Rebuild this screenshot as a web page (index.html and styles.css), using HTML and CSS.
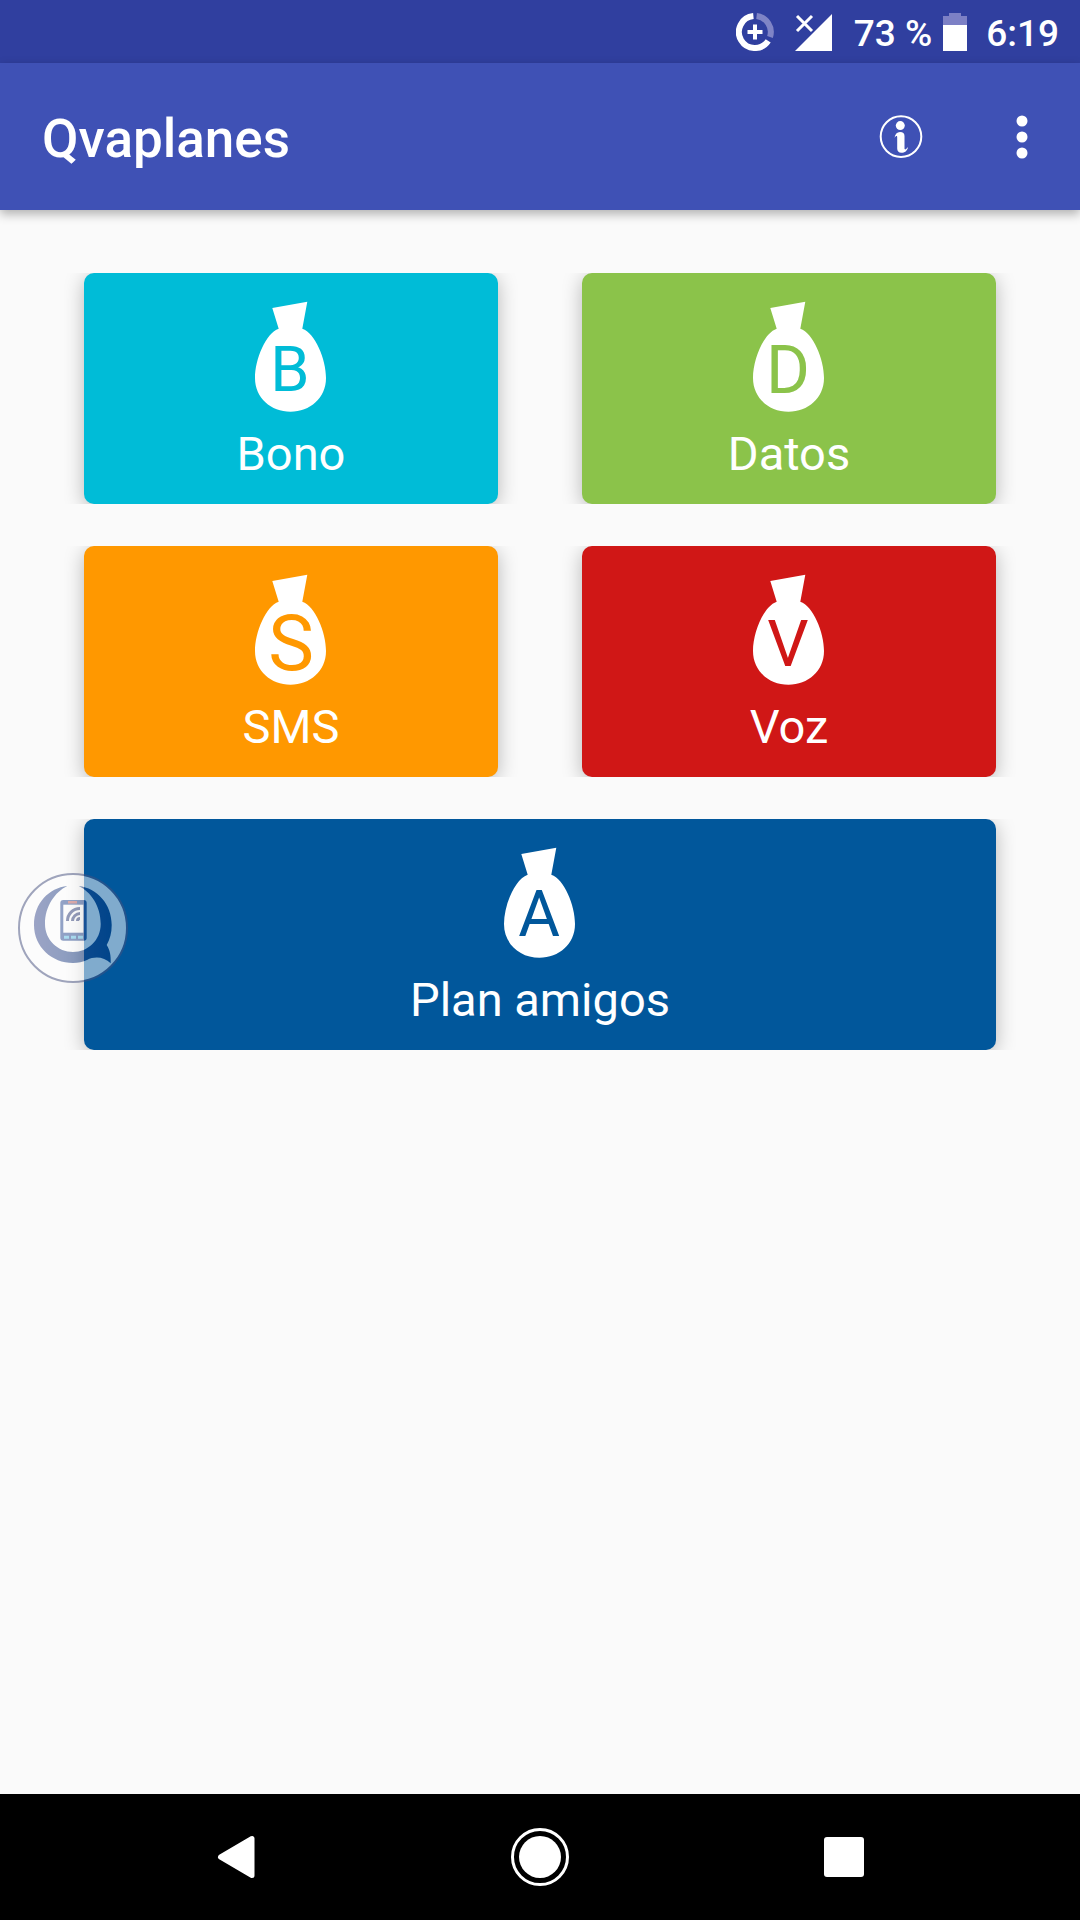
FILE: index.html
```html
<!DOCTYPE html>
<html lang="es">
<head>
  <meta charset="utf-8">
  <meta name="viewport" content="width=device-width, initial-scale=1">
  <title>Qvaplanes</title>
  <link rel="stylesheet" href="styles.css">
</head>
<body>

<div class="status-bar">
  <svg class="status-icon" viewBox="0 0 38 38">
    <path d="M20.6 3.1A16 16 0 0 1 34 24" fill="none" stroke="#7f84c6" stroke-width="6"/>
    <path d="M17.4 3.1A16 16 0 1 0 32.2 27.9" fill="none" stroke="#fff" stroke-width="6"/>
    <path d="M19 11.5v15M11.5 19h15" stroke="#fff" stroke-width="4"/>
  </svg>
  <svg class="status-icon" viewBox="0 0 38 38">
    <path d="M0 38L37 38L37 1Z" fill="#fff"/>
    <path d="M2 3L17 18M17 3L2 18" stroke="#fff" stroke-width="3"/>
  </svg>
  <span class="status-text">73 %</span>
  <svg class="battery" viewBox="0 0 24 38">
    <path d="M0 3h6V0h12v3h6v9H0z" fill="#7c80c5"/>
    <path d="M0 12h24v26H0z" fill="#fff"/>
  </svg>
  <span class="status-text clock">6:19</span>
</div>

<header class="app-bar">
  <h1>Qvaplanes</h1>
  <button class="icon-button info" aria-label="Información">
    <svg width="44" height="44" viewBox="0 0 44 44">
      <circle cx="22" cy="21.6" r="20.3" fill="none" stroke="#fff" stroke-width="2"/>
      <circle cx="21.3" cy="10.6" r="4.5" fill="#fff"/>
      <path d="M15.5 23C16 19 18 17 21 17C24 17 25.5 18.5 25.5 21V33C25.5 35.5 27 34.5 29 32C28.5 36 25.5 37.8 22.5 37.8C19.5 37.8 18.2 36 18.2 33.5V22.5C18.2 20.5 17 20.5 15.5 23Z" fill="#fff"/>
    </svg>
  </button>
  <button class="icon-button more" aria-label="Más opciones">
    <svg width="12" height="44" viewBox="0 0 12 44">
      <circle cx="6" cy="6" r="5.5" fill="#fff"/>
      <circle cx="6" cy="22" r="5.5" fill="#fff"/>
      <circle cx="6" cy="38" r="5.5" fill="#fff"/>
    </svg>
  </button>
</header>

<main>
  <svg class="defs" width="0" height="0">
    <path id="bag" d="M17.3 7L52.3 .7L47.3 27.7C60 32 71 58 71 77C71 97 55 110.7 35.5 110.7C16 110.7 0 97 0 77C0 58 11 32 23.7 27.7Z"/>
  </svg>

  <div class="plans">
    <button class="card bono">
      <svg class="bag" viewBox="0 0 72 112">
        <use href="#bag"/>
        <text x="35" y="90" font-size="63">B</text>
      </svg>
      <span>Bono</span>
    </button>
    <button class="card datos">
      <svg class="bag" viewBox="0 0 72 112">
        <use href="#bag"/>
        <text x="35" y="92" font-size="67">D</text>
      </svg>
      <span>Datos</span>
    </button>
    <button class="card sms">
      <svg class="bag" viewBox="0 0 72 112">
        <use href="#bag"/>
        <text x="36" y="96" font-size="77">S</text>
      </svg>
      <span>SMS</span>
    </button>
    <button class="card voz">
      <svg class="bag" viewBox="0 0 72 112">
        <use href="#bag"/>
        <text x="35" y="92" font-size="65">V</text>
      </svg>
      <span>Voz</span>
    </button>
    <button class="card amigos">
      <svg class="bag" viewBox="0 0 72 112">
        <use href="#bag"/>
        <text x="35" y="89" font-size="64">A</text>
      </svg>
      <span>Plan amigos</span>
    </button>
  </div>

  <button class="bubble" aria-label="Abrir burbuja">
    <svg width="110" height="110" viewBox="0 0 110 110">
      <defs>
        <linearGradient id="q" x1="0" y1="0" x2="1" y2="0">
          <stop offset="0" stop-color="#3f5092"/>
          <stop offset="1" stop-color="#00337a"/>
        </linearGradient>
      </defs>
      <circle cx="55" cy="55" r="54" fill="#fff" stroke="#46517f" stroke-width="2"/>
      <path fill="url(#q)" d="M49.3 13C31 15 16 30 16 52C16 74 34 90 55 90C60 90 65 89 69 87C77 83 86 84 92.7 90.3C93 83 92 77 88.7 72C92 66 93.7 60 93.7 52C93.7 31 79 15 60.7 13C73 19 82.7 33 82.7 51C82.7 67 70 79 55 79C40 79 27 67 27 51C27 33 37 19 49.3 13Z"/>
      <rect x="42.3" y="27" width="26.4" height="40.7" rx="3" fill="#2c4c93"/>
      <rect x="50" y="28" width="9" height="2.5" fill="#c06060"/>
      <rect x="45.3" y="31.7" width="20" height="28" fill="#fff"/>
      <path d="M46 64.2h5M53 64.2h5M60 64.2h5" stroke="#5fc0e8" stroke-width="3"/>
      <path d="M49.5 48C49.5 41 55 35.5 62 35.5M54.5 48C54.5 44 58 40.5 62 40.5M59.5 48C59.5 46 60.5 45.5 62 45.5" fill="none" stroke="#33427c" stroke-width="3"/>
    </svg>
  </button>
</main>

<nav class="nav-bar">
  <button aria-label="Atrás">
    <svg width="58" height="58" viewBox="0 0 58 58">
      <path d="M13.500 29L45 10.500V47.500Z" fill="#fff" stroke="#fff" stroke-width="5" stroke-linejoin="round"/>
    </svg>
  </button>
  <button aria-label="Inicio">
    <svg width="58" height="58" viewBox="0 0 58 58">
      <circle cx="29" cy="29" r="27.5" fill="none" stroke="#fff" stroke-width="3"/>
      <circle cx="29" cy="29" r="21" fill="#fff"/>
    </svg>
  </button>
  <button aria-label="Recientes">
    <svg width="58" height="58" viewBox="0 0 58 58">
      <rect x="9" y="9" width="40" height="40" rx="3" fill="#fff"/>
    </svg>
  </button>
</nav>

</body>
</html>
```
FILE: styles.css
```css
* {
  box-sizing: border-box;
}
html, body {
  height: 100%;
  margin: 0;
}
body {
  display: flex;
  flex-direction: column;
  background: #fafafa;
  font-family: Roboto, sans-serif;
  color: #fff;
}
button {
  border: 0;
  padding: 0;
  background: none;
  color: inherit;
  font-family: inherit;
  cursor: pointer;
}
svg {
  display: block;
}

/* status bar */
.status-bar {
  display: flex;
  align-items: center;
  justify-content: flex-end;
  height: 63px;
  padding-right: 21px;
  background: #303f9f;
}
.status-icon {
  width: 38px;
  height: 38px;
  margin-right: 21px;
}
.status-text {
  padding-top: 4px;
  font-size: 37px;
  line-height: 38px;
  font-weight: 500;
}
.battery {
  width: 24px;
  height: 38px;
  margin: 0 19px 0 11px;
}

/* app bar */
.app-bar {
  display: flex;
  align-items: center;
  height: 147px;
  padding: 0 16px 0 42px;
  background: #3f51b5;
  box-shadow: 0 4px 10px rgba(0, 0, 0, 0.3);
}
.app-bar h1 {
  flex: 1;
  margin: 0;
  padding-top: 4px;
  font-size: 53px;
  line-height: 60px;
  font-weight: 500;
}
.icon-button {
  display: flex;
  align-items: center;
  justify-content: center;
  height: 126px;
}
.info {
  width: 126px;
  margin-right: 16px;
}
.more {
  width: 84px;
}

/* cards */
main {
  position: relative;
  flex: 1;
  padding: 63px 84px;
}
.defs {
  position: absolute;
}
.plans {
  display: grid;
  grid-template-columns: 1fr 1fr;
  gap: 42px 84px;
}
.card {
  display: flex;
  flex-direction: column;
  align-items: center;
  padding: 28px 0 22px;
  border-radius: 10px;
  box-shadow: 0 4px 20px rgba(0, 0, 0, 0.27);
  /* keep the shadow on the sides only */
  clip-path: inset(0 -20px);
  font-size: 47px;
  line-height: 56px;
}
.bag {
  width: 72px;
  height: 112px;
  margin-bottom: 13px;
  overflow: visible;
  fill: #fff;
}
.bag text {
  fill: currentColor;
  text-anchor: middle;
}
.bono {
  background: #00bcd7;
}
.bono .bag {
  color: #00bcd7;
}
.datos {
  background: #8bc34a;
}
.datos .bag {
  color: #8bc34a;
}
.sms {
  background: #ff9800;
}
.sms .bag {
  color: #ff9800;
}
.voz {
  background: #d01716;
}
.voz .bag {
  color: #d01716;
}
.amigos {
  grid-column: 1 / 3;
  background: #01579b;
}
.amigos .bag {
  color: #01579b;
}

.bubble {
  position: absolute;
  top: 663px;
  left: 18px;
  border-radius: 50%;
  opacity: 0.5;
}

/* navigation bar */
.nav-bar {
  display: flex;
  height: 126px;
  padding: 0 84px;
  background: #000;
}
.nav-bar button {
  display: flex;
  flex: 1;
  align-items: center;
  justify-content: center;
}
```
